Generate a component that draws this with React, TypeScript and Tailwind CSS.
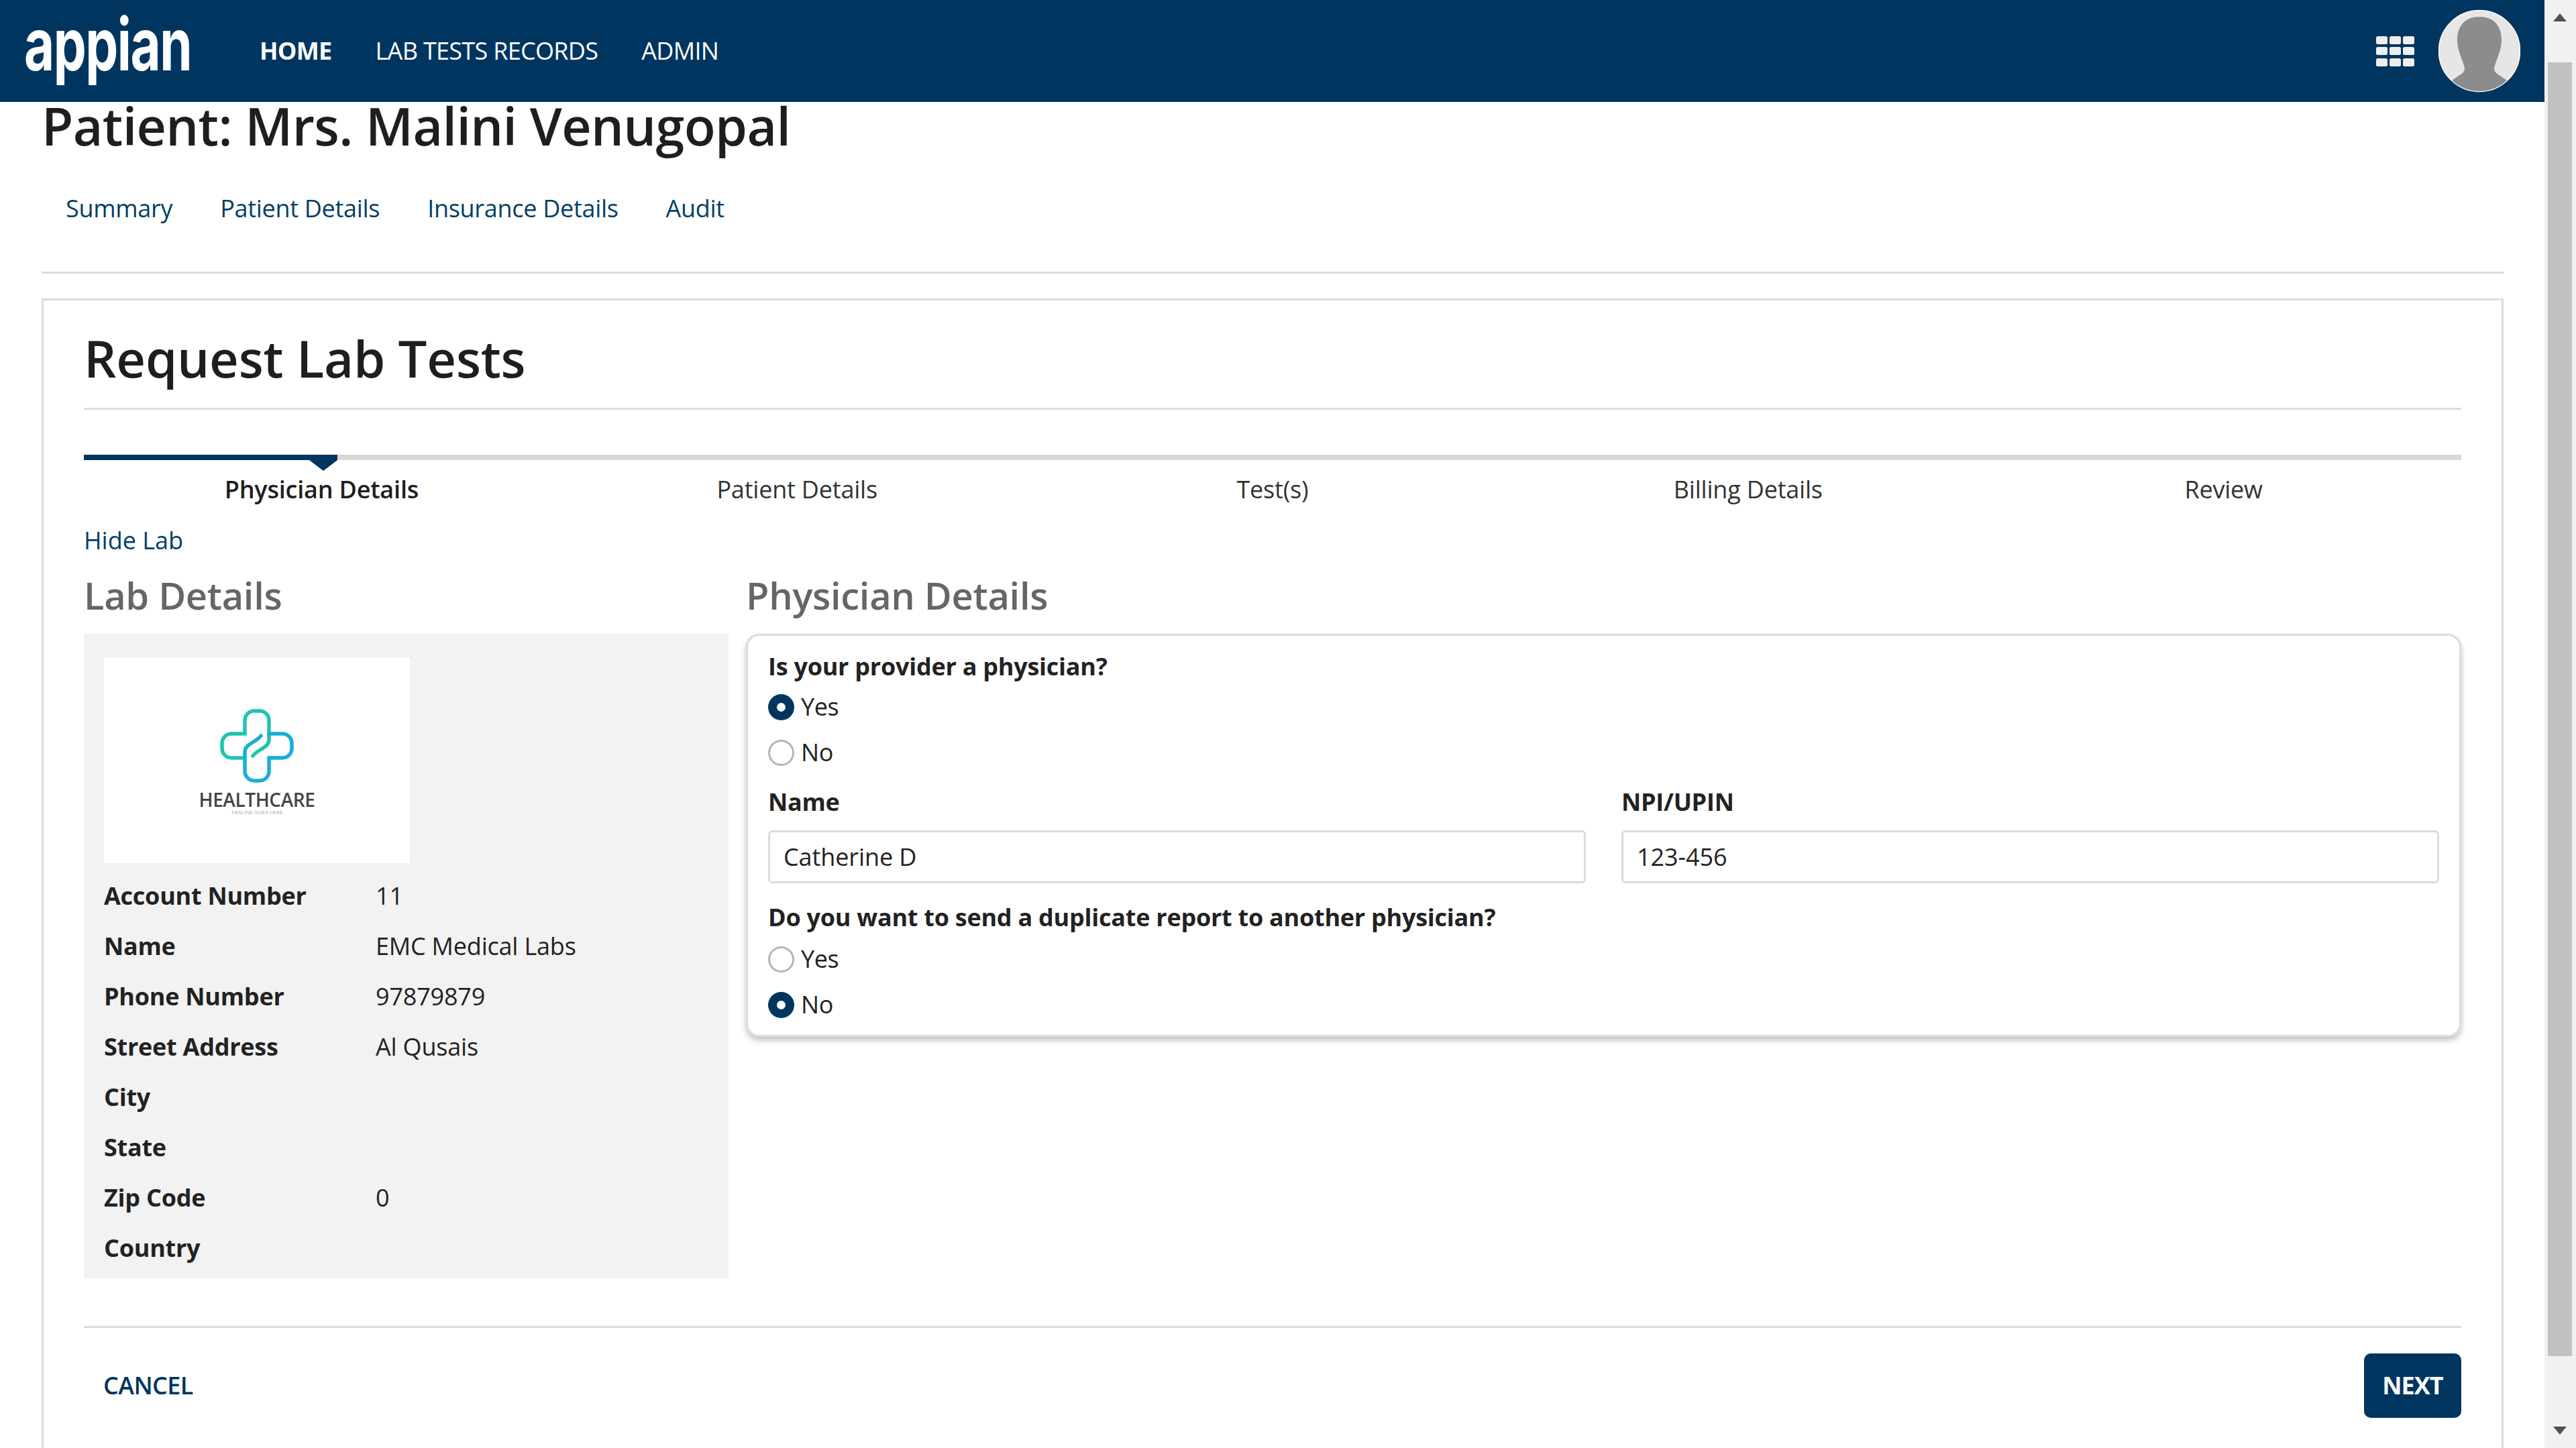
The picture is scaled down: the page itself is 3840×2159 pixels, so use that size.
const steps = ['Physician Details', 'Patient Details', 'Test(s)', 'Billing Details', 'Review']

const labRows = [
  ['Account Number', '11'],
  ['Name', 'EMC Medical Labs'],
  ['Phone Number', '97879879'],
  ['Street Address', 'Al Qusais'],
  ['City', ''],
  ['State', ''],
  ['Zip Code', '0'],
  ['Country', ''],
]

function Radio({ label, checked }: { label: string; checked?: boolean }) {
  return (
    <div className="flex h-[68px] items-center gap-[10px] text-[36px] tracking-[-0.4px] text-[#222]">
      {checked ? (
        <span className="flex h-[39px] w-[39px] items-center justify-center rounded-full bg-[#00355f]">
          <span className="h-[13px] w-[13px] rounded-full bg-white" />
        </span>
      ) : (
        <span className="h-[39px] w-[39px] rounded-full border-[3px] border-[#b4b4b4] bg-white" />
      )}
      <span>{label}</span>
    </div>
  )
}

function TextField({ label, value }: { label: string; value: string }) {
  return (
    <div>
      <div className="h-[40px] text-[36px] font-bold leading-[40px] tracking-[-0.25px] text-[#222]">{label}</div>
      <div className="mt-[22px] flex h-[79px] items-center rounded-[6px] border-[3px] border-[#dcdcdc] pl-[20px] text-[36px] tracking-[-0.1px] text-[#222]">
        {value}
      </div>
    </div>
  )
}

function HealthcareLogo() {
  return (
    <div className="flex h-[306px] w-[456px] flex-col items-center bg-white pt-[76px]">
      <svg viewBox="0 0 110 110" className="h-[110px] w-[110px]" fill="none" strokeWidth="5.5" strokeLinecap="round">
        <path
          d="M37 73H17A14 14 0 0 1 3 59V51A14 14 0 0 1 17 37H37V17A14 14 0 0 1 51 3H59A14 14 0 0 1 73 17V46C73 58 56 60 49 70"
          stroke="#1fc4ae"
        />
        <path
          d="M73 37H93A14 14 0 0 1 107 51V59A14 14 0 0 1 93 73H73V93A14 14 0 0 1 59 107H51A14 14 0 0 1 37 93V64C37 52 54 50 61 40"
          stroke="#18aed6"
        />
      </svg>
      <div className="mt-[11px] text-[28px] font-semibold leading-[28px] tracking-[-0.4px] text-[#444]">HEALTHCARE</div>
      <div className="text-[8px] leading-[10px] text-[#aaa]">TAGLINE GOES HERE</div>
    </div>
  )
}

export default function App() {
  return (
    <div className="flex h-[2159px] overflow-hidden bg-white font-['Open_Sans',sans-serif]">
      <div className="w-[3793px]">
        {/* top bar */}
        <header className="flex h-[152px] items-center bg-[#00355f] pr-[36px] text-white">
          <div className="mb-[20px] ml-[36px] w-[249px]">
            <span className="block origin-left scale-x-[0.72] font-['Inter',sans-serif] text-[108px] font-bold leading-[108px] tracking-[-2px]">appian</span>
          </div>
          <nav className="ml-[102px] flex gap-[65px] text-[36px] tracking-[-0.7px]">
            <span className="font-bold">HOME</span>
            <span>LAB TESTS RECORDS</span>
            <span>ADMIN</span>
          </nav>
          <svg viewBox="0 0 57 45" className="ml-auto h-[45px] w-[57px]" fill="#eeeeee">
            <rect x="0" y="0" width="17" height="12" rx="2.5" />
            <rect x="20" y="0" width="17" height="12" rx="2.5" />
            <rect x="40" y="0" width="17" height="12" rx="2.5" />
            <rect x="0" y="16" width="17" height="12" rx="2.5" />
            <rect x="20" y="16" width="17" height="12" rx="2.5" />
            <rect x="40" y="16" width="17" height="12" rx="2.5" />
            <rect x="0" y="33" width="17" height="12" rx="2.5" />
            <rect x="20" y="33" width="17" height="12" rx="2.5" />
            <rect x="40" y="33" width="17" height="12" rx="2.5" />
          </svg>
          <svg viewBox="0 0 122 124" className="ml-[36px] h-[124px] w-[122px]">
            <clipPath id="avatar">
              <circle cx="61" cy="62" r="60" />
            </clipPath>
            <circle cx="61" cy="62" r="60.5" fill="#e6e6e6" stroke="#ffffff" strokeWidth="1.5" />
            <path
              clipPath="url(#avatar)"
              d="M61 11C42 11 28 22 28 46C28 62 36 74 39 88C39 92 36 96 30 99L20 106C30 118 45 124 61 124C77 124 92 118 102 106L92 99C86 96 83 92 83 88C86 74 94 62 94 46C94 22 80 11 61 11Z"
              fill="#8c8c8c"
            />
          </svg>
        </header>

        <div className="pl-[62px] pr-[61px]">
          <h1 className="h-[72px] text-[77px] font-semibold leading-[72px] tracking-[-0.6px] text-[#1e1e1e]">
            Patient: Mrs. Malini Venugopal
          </h1>
          <div className="mt-[57px] flex h-[60px] items-center gap-[71px] pl-[36px] text-[36px] tracking-[-0.3px] text-[#003f66]">
            <span>Summary</span>
            <span>Patient Details</span>
            <span>Insurance Details</span>
            <span>Audit</span>
          </div>
          <div className="mt-[64px] border-t-[3px] border-[#dcdcdc]" />

          {/* request card, runs off the bottom of the window */}
          <div className="mt-[37px] border-x-[3px] border-t-[3px] border-[#dcdcdc] px-[60px] pb-[80px] pt-[36px]">
            <h2 className="h-[100px] text-[76px] font-semibold leading-[100px] tracking-[-0.2px] text-[#1e1e1e]">Request Lab Tests</h2>
            <div className="mt-[24px] border-t-[3px] border-[#dcdcdc]" />

            <div className="relative mt-[67px] h-[8px] bg-[#d8d8d8]">
              <div className="h-[8px] w-[378px] bg-[#00355f]" />
              <svg viewBox="0 0 42 16" className="absolute left-[336px] top-[8px] h-[16px] w-[42px]" fill="#00355f">
                <path d="M0 0H42L21 16Z" />
              </svg>
            </div>
            <div className="mt-[24px] grid grid-cols-5 text-center text-[36px] leading-[40px] tracking-[-0.2px] text-[#333]">
              {steps.map((step, idx) => (
                <span key={step} className={idx === 0 ? 'font-semibold text-[#1e1e1e]' : ''}>
                  {step}
                </span>
              ))}
            </div>

            <div className="mt-[36px] h-[40px] text-[36px] leading-[40px] text-[#003f66]">Hide Lab</div>

            <div className="mt-[26px] flex gap-[26px]">
              <div className="w-[961px]">
                <h3 className="h-[70px] text-[56px] font-semibold leading-[70px] tracking-[-0.3px] text-[#666]">Lab Details</h3>
                <div className="mt-[23px] h-[961px] bg-[#f2f2f2] px-[30px] pt-[36px]">
                  <HealthcareLogo />
                  <div className="mt-[11px]">
                    {labRows.map(([name, value]) => (
                      <div key={name} className="grid h-[75px] grid-cols-[405px_1fr] items-center text-[36px] tracking-[-0.2px] text-[#222]">
                        <span className="font-bold tracking-[-0.25px]">{name}</span>
                        <span>{value}</span>
                      </div>
                    ))}
                  </div>
                </div>
              </div>

              <div className="flex-1">
                <h3 className="h-[70px] text-[56px] font-semibold leading-[70px] tracking-[-0.3px] text-[#666]">Physician Details</h3>
                <div className="mt-[23px] h-[601px] rounded-[20px] border-[3px] border-[#dcdcdc] px-[30px] pt-[26px] shadow-[0_5px_8px_rgba(0,0,0,0.25)]">
                  <div className="h-[40px] text-[36px] font-bold leading-[40px] tracking-[-0.25px] text-[#222]">Is your provider a physician?</div>
                  <div className="mt-[6px]">
                    <Radio label="Yes" checked />
                    <Radio label="No" />
                  </div>
                  <div className="mt-[20px] grid grid-cols-2 gap-[53px]">
                    <TextField label="Name" value="Catherine D" />
                    <TextField label="NPI/UPIN" value="123-456" />
                  </div>
                  <div className="mt-[31px] h-[40px] text-[36px] font-bold leading-[40px] tracking-[-0.25px] text-[#222]">
                    Do you want to send a duplicate report to another physician?
                  </div>
                  <div className="mt-[8px]">
                    <Radio label="Yes" />
                    <Radio label="No" checked />
                  </div>
                </div>
              </div>
            </div>

            <div className="mt-[71px] border-t-[3px] border-[#dcdcdc]" />
            <div className="mt-[38px] flex items-center justify-between pl-[29px]">
              <span className="text-[36px] font-semibold tracking-[-0.6px] text-[#00355f]">CANCEL</span>
              <button className="h-[96px] w-[145px] rounded-[10px] bg-[#00355f] text-[36px] font-bold tracking-[-1px] text-white">NEXT</button>
            </div>
          </div>
        </div>
      </div>

      {/* window scrollbar */}
      <div className="h-[2159px] w-[47px] bg-[#f1f1f1] pl-[5px] pt-[20px]">
        <svg viewBox="0 0 20 12" className="ml-[8px] h-[12px] w-[20px]" fill="#505050">
          <path d="M10 0L20 12H0Z" />
        </svg>
        <div className="mt-[61px] h-[1929px] w-[36px] bg-[#c1c1c1]" />
        <svg viewBox="0 0 20 12" className="ml-[8px] mt-[105px] h-[12px] w-[20px]" fill="#505050">
          <path d="M0 0H20L10 12Z" />
        </svg>
      </div>
    </div>
  )
}
